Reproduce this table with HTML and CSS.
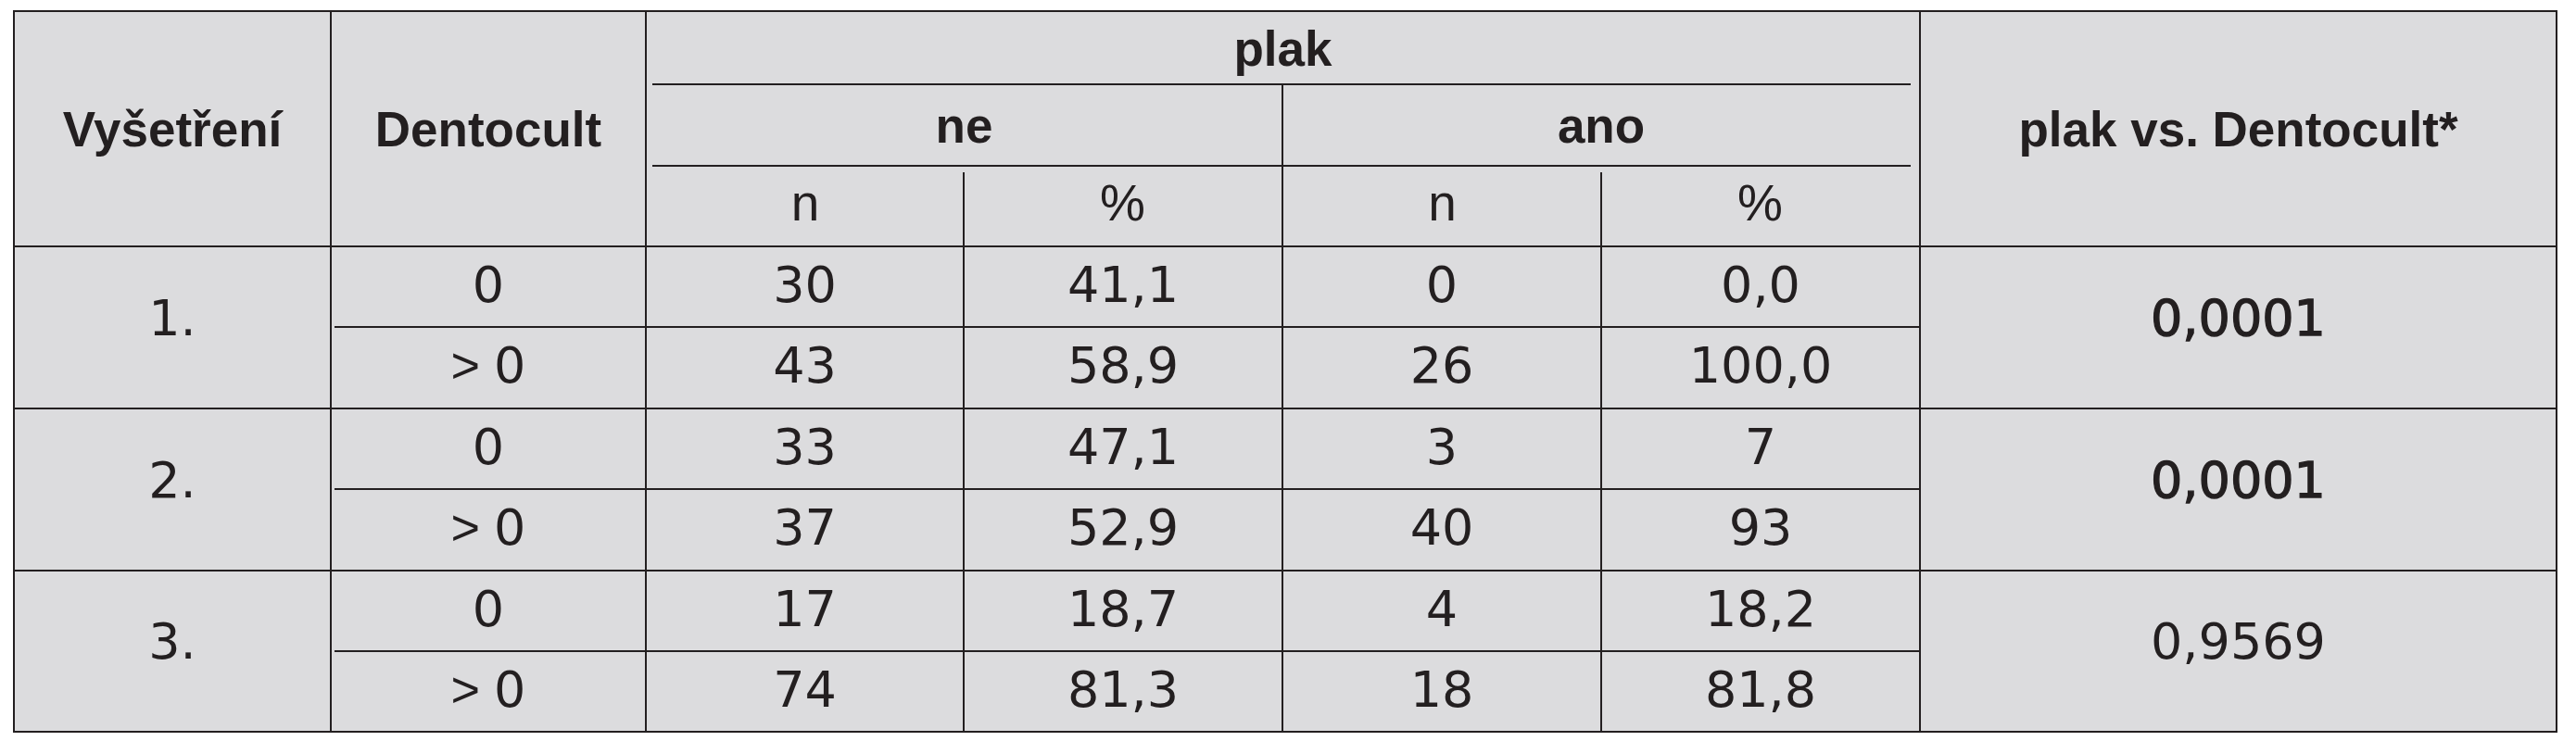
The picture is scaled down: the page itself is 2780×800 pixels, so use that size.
FILE: index.html
```html
<!DOCTYPE html>
<html lang="cs">
<head>
<meta charset="utf-8">
<title>plak vs. Dentocult</title>
<link rel="stylesheet" href="styles.css">
</head>
<body>
<table class="data">
  <colgroup>
    <col class="c1"><col class="c2"><col class="c3"><col class="c4"><col class="c5"><col class="c6"><col class="c7">
  </colgroup>
  <thead>
    <tr class="h1">
      <th rowspan="3" class="tall vy">Vyšetření</th>
      <th rowspan="3" class="tall">Dentocult</th>
      <th colspan="4" class="plak">plak</th>
      <th rowspan="3" class="tall">plak vs. Dentocult*</th>
    </tr>
    <tr class="h2">
      <th colspan="2" class="sub ne">ne</th>
      <th colspan="2" class="sub ano">ano</th>
    </tr>
    <tr class="h3">
      <th class="unit un">n</th>
      <th class="unit up">%</th>
      <th class="unit un">n</th>
      <th class="unit up">%</th>
    </tr>
  </thead>
  <tbody>
    <tr class="ra">
      <td rowspan="2" class="span">1.</td>
      <td class="d0">0</td><td>30</td><td>41,1</td><td>0</td><td>0,0</td>
      <td rowspan="2" class="span pv">0,0001</td>
    </tr>
    <tr class="rb">
      <td class="dg"><span class="gt">&gt; </span>0</td><td>43</td><td>58,9</td><td>26</td><td>100,0</td>
    </tr>
    <tr class="ra">
      <td rowspan="2" class="span">2.</td>
      <td class="d0">0</td><td>33</td><td>47,1</td><td>3</td><td>7</td>
      <td rowspan="2" class="span pv">0,0001</td>
    </tr>
    <tr class="rb">
      <td class="dg"><span class="gt">&gt; </span>0</td><td>37</td><td>52,9</td><td>40</td><td>93</td>
    </tr>
    <tr class="ra">
      <td rowspan="2" class="span">3.</td>
      <td class="d0">0</td><td>17</td><td>18,7</td><td>4</td><td>18,2</td>
      <td rowspan="2" class="span">0,9569</td>
    </tr>
    <tr class="rb last">
      <td class="dg"><span class="gt">&gt; </span>0</td><td>74</td><td>81,3</td><td>18</td><td>81,8</td>
    </tr>
  </tbody>
</table>
</body>
</html>
```
FILE: styles.css
```css
html, body {
  margin: 0;
  padding: 0;
  background: #ffffff;
}

.data {
  margin: 11px 0 0 14px;
  border-collapse: collapse;
  table-layout: fixed;
  width: 2746px;
  background: #dcdcde;
  color: #231f20;
}

.c1 { width: 342px; }
.c2 { width: 340px; }
.c3 { width: 343px; }
.c4 { width: 344px; }
.c5 { width: 344px; }
.c6 { width: 344px; }
.c7 { width: 687px; }

.data th,
.data td {
  border: 2px solid #231f20;
  padding: 0;
  text-align: center;
  vertical-align: middle;
  position: relative;
}

.data th {
  font: 700 53px/1 "Liberation Sans", Arial, sans-serif;
}

.data td {
  font: 400 54px/1 "DejaVu Sans", "Liberation Sans", sans-serif;
  padding-bottom: 4px;
}

.h1 { height: 79px; }
.h2 { height: 88px; }
.h3 { height: 87px; }
.ra { height: 87px; }
.rb { height: 88px; }
.rb.last { height: 87px; }

.tall { padding-bottom: 13px; }
.vy { padding-right: 13px; }

/* header inner lines with small gaps */
.plak {
  padding-bottom: 10px;
  border-bottom-style: none !important;
}
.plak::after {
  content: "";
  position: absolute;
  left: 6px;
  right: 9px;
  bottom: -1px;
  height: 2px;
  background: #231f20;
}

.sub {
  padding-bottom: 4px;
  border-top-style: none !important;
  border-bottom-style: none !important;
}
.sub::after {
  content: "";
  position: absolute;
  bottom: -1px;
  height: 2px;
  background: #231f20;
}
.ne::after { left: 6px; right: -1px; }
.ano::after { left: -1px; right: 9px; }

.data th.unit {
  font-weight: 400;
  font-size: 55px;
  padding-bottom: 6px;
  border-top-style: none !important;
}
.un { border-right-style: none !important; }
.up { border-left-style: none !important; }
.un::after {
  content: "";
  position: absolute;
  right: -1px;
  top: 7px;
  bottom: -1px;
  width: 2px;
  background: #231f20;
}

/* body */
.data td.span { padding-bottom: 20px; }

.pv {
  -webkit-text-stroke: 1.3px #231f20;
}

.d0 {
  border-bottom-style: none !important;
}
.dg {
  border-top-style: none !important;
}
.d0::after {
  content: "";
  position: absolute;
  left: 3px;
  right: -1px;
  bottom: -1px;
  height: 2px;
  background: #231f20;
}

.gt {
  font-family: "Liberation Sans", Arial, sans-serif;
}
```
